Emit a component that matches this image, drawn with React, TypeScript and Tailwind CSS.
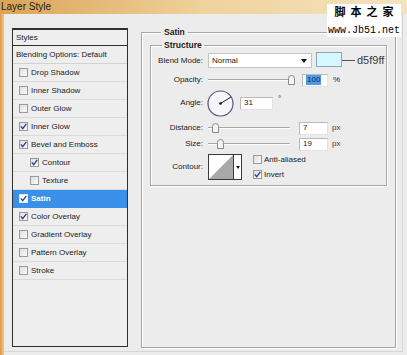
import React from 'react';

const sans = { fontFamily: '"Liberation Sans", Arial, sans-serif' };

function Check({ checked, light }: { checked: boolean; light?: boolean }) {
  return (
    <span
      className={
        'w-[9px] h-[9px] border flex items-center justify-center shrink-0 ' +
        (light ? 'border-[#dfe9f5] bg-white' : 'border-[#9a9a9a] bg-gradient-to-br from-[#dedede] to-[#fbfbfb]')
      }
    >
      {checked && (
        <svg width="7" height="7" viewBox="0 0 7 7">
          <path d="M0.8 3.4 L2.7 5.6 L6.3 0.9" stroke="#2b3c8c" strokeWidth="1.3" fill="none" />
        </svg>
      )}
    </span>
  );
}

const items = [
  { label: 'Drop Shadow', checked: false },
  { label: 'Inner Shadow', checked: false },
  { label: 'Outer Glow', checked: false },
  { label: 'Inner Glow', checked: true },
  { label: 'Bevel and Emboss', checked: true },
  { label: 'Contour', checked: true, indent: true },
  { label: 'Texture', checked: false, indent: true },
  { label: 'Satin', checked: true, selected: true },
  { label: 'Color Overlay', checked: true },
  { label: 'Gradient Overlay', checked: false },
  { label: 'Pattern Overlay', checked: false },
  { label: 'Stroke', checked: false },
];

function Thumb() {
  return (
    <svg width="7" height="10" viewBox="0 0 7 10">
      <path d="M0.5 9.5 V3.5 Q0.5 0.5 3.5 0.5 Q6.5 0.5 6.5 3.5 V9.5 Z" fill="#f4f4f4" stroke="#8a8a8a" />
    </svg>
  );
}

function Slider({ width, pos }: { width: number; pos: number }) {
  return (
    <div className="relative h-[14px] shrink-0" style={{ width }}>
      <div className="absolute left-0 right-0 top-[6px] h-[2px] border-t border-[#a8a8a8] border-b border-b-white" />
      <div className="absolute top-[2px]" style={{ left: pos }}>
        <Thumb />
      </div>
    </div>
  );
}

function Field({ w, children, sel }: { w: number; children: React.ReactNode; sel?: boolean }) {
  return (
    <div
      className="h-[13px] bg-white border border-[#b9b9b9] border-b-[#e2e2e2] border-r-[#e2e2e2] flex items-center pl-[3px] text-[8px] text-[#222] shrink-0"
      style={{ width: w }}
    >
      {sel ? <span className="bg-[#4f9bea] text-[#0d2a55] px-[1px] leading-[10px]">{children}</span> : children}
    </div>
  );
}

export default function App() {
  return (
    <div className="w-[407px] h-[355px] overflow-hidden relative flex flex-col bg-[#ececec]" style={sans}>
      {/* title bar */}
      <div className="h-[14px] shrink-0 bg-gradient-to-r from-[#dba354] via-[#efd29c] to-[#f4e3c0] flex items-center pl-[1px]">
        <span className="text-[10px] text-[#1e1e1e] leading-none">Layer Style</span>
      </div>

      {/* watermark */}
      <div className="absolute right-[6px] top-[4px] w-[74px] bg-white flex flex-col items-center">
        <span
          className="text-[11px] font-bold text-black leading-[14px] tracking-[5px] pl-[5px]"
          style={{ fontFamily: '"Noto Sans CJK SC", sans-serif' }}
        >
          脚本之家
        </span>
        <span className="text-[10px] text-black leading-[12px] mt-[7px]" style={{ fontFamily: '"Liberation Mono", monospace' }}>
          www.Jb51.net
        </span>
      </div>

      <div className="flex-1 flex">
        <div className="w-[4px] bg-gradient-to-r from-[#dc9a3e] to-[#edc789] shrink-0" />
        <div className="flex-1 flex pt-[13px] pl-[8px] border-r border-[#d6d6d6] mr-[4px] mb-[3px] border-b">
          {/* left list */}
          <div className="w-[116px] h-[319px] mt-[1px] border border-[#303030] border-t-2 bg-[#eeeeee] flex flex-col text-[8px] text-[#222] shrink-0">
            <div className="h-[16px] border-b border-[#303030] flex items-center pl-[3px]">Styles</div>
            <div className="h-[18px] border-b border-[#d2d2d2] flex items-center pl-[3px]">Blending Options: Default</div>
            {items.map((it) => (
              <div
                key={it.label}
                className={
                  'h-[18px] border-b flex items-center gap-[3px] ' +
                  (it.indent ? 'pl-[17px] ' : 'pl-[6px] ') +
                  (it.selected ? 'bg-[#3a8fe8] text-white font-bold border-[#3a8fe8]' : 'border-[#dadada]')
                }
              >
                <Check checked={it.checked} light={it.selected} />
                <span>{it.label}</span>
              </div>
            ))}
          </div>

          {/* right panel */}
          <fieldset className="ml-[13px] w-[255px] h-[321px] border border-[#a6a6a6] shadow-[inset_1px_1px_0_#ffffff,1px_1px_0_#ffffff] px-[8px] shrink-0">
            <legend className="ml-[11px] px-[3px] text-[8.5px] font-bold text-[#1a1a1a] leading-[10px]">Satin</legend>
            <fieldset className="mt-[3px] border border-[#a6a6a6] shadow-[inset_1px_1px_0_#ffffff,1px_1px_0_#ffffff] pb-[5px]">
              <legend className="ml-[11px] px-[2px] text-[8.5px] font-bold text-[#1a1a1a] leading-[10px]">Structure</legend>

              {/* Blend mode */}
              <div className="flex items-center h-[17px] mt-[2px] text-[8px] text-[#222]">
                <span className="w-[52px] text-right shrink-0">Blend Mode:</span>
                <div className="ml-[5px] w-[104px] h-[15px] bg-white border border-[#c4c4c4] flex items-center pl-[3px] justify-between pr-[4px] shrink-0">
                  <span>Normal</span>
                  <svg width="6" height="4" viewBox="0 0 6 4"><path d="M0 0 H6 L3 4 Z" fill="#111" /></svg>
                </div>
                <div className="ml-[4px] w-[26px] h-[15px] bg-[#d5f9ff] border border-[#8fa7b5] shrink-0 -mt-[2px]" />
                <div className="w-[13px] h-px bg-[#555] shrink-0" />
                <span className="ml-[2px] text-[11px] text-[#3a3a3a] leading-none">d5f9ff</span>
              </div>

              {/* Opacity */}
              <div className="flex items-center h-[14px] mt-[4px] text-[8px] text-[#222]">
                <span className="w-[52px] text-right shrink-0">Opacity:</span>
                <div className="ml-[5px]"><Slider width={86} pos={80} /></div>
                <div className="ml-[8px]"><Field w={26} sel>100</Field></div>
                <span className="ml-[5px]">%</span>
              </div>

              {/* Angle */}
              <div className="flex items-center h-[28px] mt-[2px] text-[8px] text-[#222]">
                <span className="w-[52px] text-right shrink-0">Angle:</span>
                <svg className="ml-[4px] shrink-0" width="27" height="27" viewBox="0 0 27 27">
                  <circle cx="13.5" cy="13.5" r="12.5" fill="#f7f7fb" stroke="#55587a" strokeWidth="1.2" />
                  <line x1="13.5" y1="13.5" x2="24" y2="7" stroke="#1c1c2c" strokeWidth="1" />
                  <circle cx="13.5" cy="13.5" r="1.3" fill="#111" />
                </svg>
                <div className="ml-[6px]"><Field w={33}>31</Field></div>
                <span className="ml-[5px] self-start mt-[4px]">°</span>
              </div>

              {/* Distance */}
              <div className="flex items-center h-[14px] mt-[4px] text-[8px] text-[#222]">
                <span className="w-[52px] text-right shrink-0">Distance:</span>
                <div className="ml-[5px]"><Slider width={82} pos={4} /></div>
                <div className="ml-[9px]"><Field w={29}>7</Field></div>
                <span className="ml-[4px] text-[#444]">px</span>
              </div>

              {/* Size */}
              <div className="flex items-center h-[14px] mt-[2px] text-[8px] text-[#222]">
                <span className="w-[52px] text-right shrink-0">Size:</span>
                <div className="ml-[5px]"><Slider width={82} pos={9} /></div>
                <div className="ml-[9px]"><Field w={29}>19</Field></div>
                <span className="ml-[4px] text-[#444]">px</span>
              </div>

              {/* Contour */}
              <div className="flex items-center h-[26px] mt-[3px] text-[8px] text-[#222]">
                <span className="w-[52px] text-right shrink-0">Contour:</span>
                <div className="ml-[5px] w-[34px] h-[26px] border border-[#3a3a3a] bg-white flex shrink-0">
                  <svg width="24" height="24" viewBox="0 0 24 24" className="shrink-0">
                    <path d="M0 24 L24 0 V24 Z" fill="#a9a9a9" />
                  </svg>
                  <div className="flex-1 border-l border-[#3a3a3a] flex items-center justify-center">
                    <svg width="4" height="3" viewBox="0 0 4 3"><path d="M0 0 H4 L2 3 Z" fill="#111" /></svg>
                  </div>
                </div>
                <div className="ml-[11px] flex flex-col gap-[3px]">
                  <div className="flex items-center gap-[2px]">
                    <Check checked={false} />
                    <span>Anti-aliased</span>
                  </div>
                  <div className="flex items-center gap-[2px]">
                    <Check checked={true} />
                    <span>Invert</span>
                  </div>
                </div>
              </div>
            </fieldset>
          </fieldset>
        </div>
      </div>
    </div>
  );
}
